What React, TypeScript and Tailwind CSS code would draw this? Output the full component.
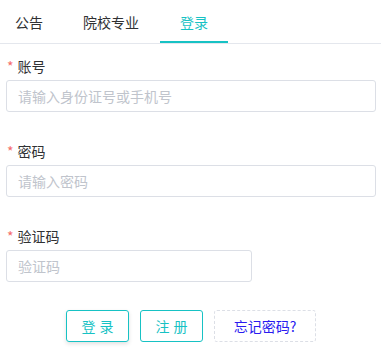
import React from "react";

const tabs = ["公告", "院校专业", "登录"];

type FieldProps = {
  label: string;
  placeholder: string;
  type?: string;
  width?: string;
  last?: boolean;
};

const Field = ({ label, placeholder, type = "text", width = "w-[370px]", last }: FieldProps) => (
  <div className={last ? "" : "mb-[29px]"}>
    <div className="flex items-center h-5 mb-1 text-sm text-[#303133]">
      <span className="text-[#f56c6c] ml-px mr-1">*</span>
      {label}
    </div>
    <input
      type={type}
      placeholder={placeholder}
      className={`${width} h-8 px-[11px] text-sm border border-[#dcdfe6] rounded-[3px] outline-none placeholder:text-[#c0c4cc]`}
    />
  </div>
);

const App = () => {
  return (
    <div
      className="w-[381px] h-[348px] bg-white overflow-hidden"
      style={{ fontFamily: '"Noto Sans CJK SC", "Noto Sans", sans-serif' }}
    >
      <div className="flex h-[44px] border-b border-[#e4e7ed]">
        {tabs.map((t, i) => (
          <div
            key={t}
            className={`relative flex items-center h-[43px] text-sm ${
              i === 0 ? "pl-[15px] pr-5" : "px-5"
            } ${i === 2 ? "text-[#17c2c4] ml-px" : "text-[#303133]"}`}
          >
            {t}
            {i === 2 && <div className="absolute left-0 right-0 bottom-0 h-[2px] bg-[#17c2c4]" />}
          </div>
        ))}
      </div>

      <div className="pt-3 pl-1.5">
        <Field label="账号" placeholder="请输入身份证号或手机号" />
        <Field label="密码" placeholder="请输入密码" type="password" />
        <Field label="验证码" placeholder="验证码" width="w-[246px]" last />

        <div className="flex gap-[11px] mt-[28px] pl-[60px]">
          <button className="w-[63px] h-8 text-sm tracking-[4px] pl-1 text-[#17c2c4] border border-[#17c2c4] rounded-[3px] shadow-[0_2px_4px_rgba(0,0,0,0.12)]">
            登录
          </button>
          <button className="w-[63px] h-8 text-sm tracking-[4px] pl-1 text-[#17c2c4] border border-[#17c2c4] rounded-[3px]">
            注册
          </button>
          <button className="w-[102px] h-8 text-sm text-[#2a1bef] border border-dashed border-[#dcdfe6] rounded-[3px]">
            忘记密码?
          </button>
        </div>
      </div>
    </div>
  );
};

export default App;
